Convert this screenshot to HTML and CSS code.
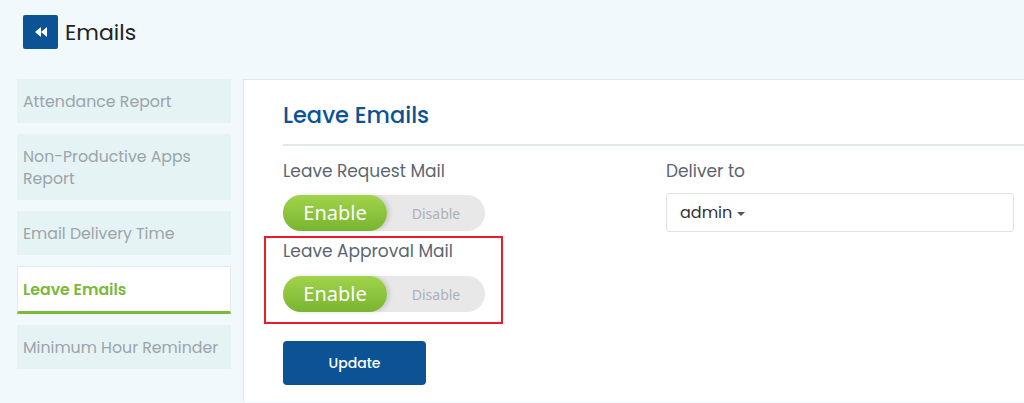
FILE: index.html
```html
<!DOCTYPE html>
<html>

<head>
  <meta charset="UTF-8">
  <title>Emails</title>
  <link rel="stylesheet" href="styles.css">
</head>

<body>
  <div class="header">
    <a class="back-btn" href="#">
      <svg width="14" height="12" viewBox="0 0 14 12">
        <path d="M7 1 L1 6 L7 11 Z" fill="#fff" />
        <path d="M13 1 L7 6 L13 11 Z" fill="#fff" />
      </svg>
    </a>
    <h1>Emails</h1>
  </div>

  <div class="wrapper">
    <div class="sidebar">
      <div class="side-item">Attendance Report</div>
      <div class="side-item">Non-Productive Apps Report</div>
      <div class="side-item">Email Delivery Time</div>
      <div class="side-item active">Leave Emails</div>
      <div class="side-item">Minimum Hour Reminder</div>
    </div>

    <div class="panel">
      <h2>Leave Emails</h2>
      <div class="divider"></div>

      <div class="form">
        <div class="col-left">
          <div class="field">
            <div class="label">Leave Request Mail</div>
            <div class="toggle">
              <span class="on">Enable</span>
              <span class="off">Disable</span>
            </div>
          </div>

          <div class="field highlight">
            <div class="label">Leave Approval Mail</div>
            <div class="toggle">
              <span class="on">Enable</span>
              <span class="off">Disable</span>
            </div>
          </div>

          <button class="update">Update</button>
        </div>

        <div class="col-right">
          <div class="label">Deliver to</div>
          <div class="select">admin <span class="caret"></span></div>
        </div>
      </div>
    </div>
  </div>
</body>

</html>
```

FILE: styles.css
```css
body {
  margin: 0;
  height: 403px;
  background: #f1f9fc;
  font-family: 'Poppins', 'Inter', 'Noto Sans', sans-serif;
  overflow: hidden;
}

.header {
  display: flex;
  align-items: center;
  padding: 15px 0 0 23px;
  height: 34px;
  margin-bottom: 30px;
}

.back-btn {
  width: 35px;
  height: 34px;
  background: #0b5394;
  border-radius: 2px;
  display: flex;
  align-items: center;
  justify-content: center;
}

.header h1 {
  margin: 0 0 0 7px;
  font-size: 22px;
  font-weight: 400;
  color: #222;
}

.wrapper {
  display: flex;
  gap: 12px;
  padding-left: 17px;
}

.sidebar {
  width: 214px;
  flex-shrink: 0;
  display: flex;
  flex-direction: column;
  gap: 11px;
}

.side-item {
  background: #e6f3f4;
  color: #9ba4aa;
  font-size: 15.75px;
  line-height: 22px;
  padding: 12px 6px 10px;
}

.side-item.active {
  background: #fff;
  color: #7cb83a;
  font-weight: 600;
  border: 1px solid #e3e8ea;
  border-bottom: 3px solid #7cb83a;
  padding: 12px 5px 10px;
}

.panel {
  flex: 1;
  background: #fff;
  border: 1px solid #e0e7ea;
  border-right: none;
  border-bottom: none;
  height: 303px;
  padding: 19px 0 0 39px;
}

.panel h2 {
  margin: 0;
  font-size: 22.5px;
  font-weight: 500;
  color: #0b5394;
  line-height: 32px;
}

.divider {
  height: 2px;
  background: #e3e9eb;
  margin: 13px 0 13px;
}

.form {
  display: flex;
}

.col-left {
  width: 383px;
}

.col-right {
  width: 348px;
}

.label {
  font-size: 17px;
  color: #5b6670;
  line-height: 24px;
  margin-bottom: 12px;
}

.toggle {
  width: 202px;
  height: 36px;
  border-radius: 18px;
  background: #e8e8e8;
  display: flex;
  align-items: center;
}

.toggle .on {
  width: 104px;
  height: 36px;
  border-radius: 18px;
  background: linear-gradient(#a2d34c, #78b52f);
  box-shadow: 3px 0 4px rgba(0, 0, 0, 0.12);
  color: #fff;
  font-family: 'Noto Sans', sans-serif;
  font-size: 20px;
  line-height: 36px;
  text-align: center;
}

.toggle .off {
  flex: 1;
  text-align: center;
  color: #aab1ba;
  font-family: 'Noto Sans', sans-serif;
  font-size: 14px;
}

.field {
  margin-bottom: 5px;
}

.highlight {
  width: 201px;
  margin-left: -19px;
  padding: 1px 17px 10px;
  border: 2px solid #ea1c28;
}

.highlight .label {
  margin-bottom: 13px;
}

.update {
  margin-top: 12px;
  width: 143px;
  height: 44px;
  border: none;
  border-radius: 4px;
  background: #0b5394;
  color: #fff;
  font-family: 'Poppins', 'Inter', 'Noto Sans', sans-serif;
  font-size: 14px;
  font-weight: 500;
}

.select {
  height: 37px;
  border: 1px solid #dde3e6;
  border-radius: 3px;
  margin-top: -2px;
  padding-left: 13px;
  font-size: 16px;
  line-height: 37px;
  color: #333;
}

.caret {
  display: inline-block;
  border-left: 4px solid transparent;
  border-right: 4px solid transparent;
  border-top: 4px solid #555;
  vertical-align: middle;
}
```
